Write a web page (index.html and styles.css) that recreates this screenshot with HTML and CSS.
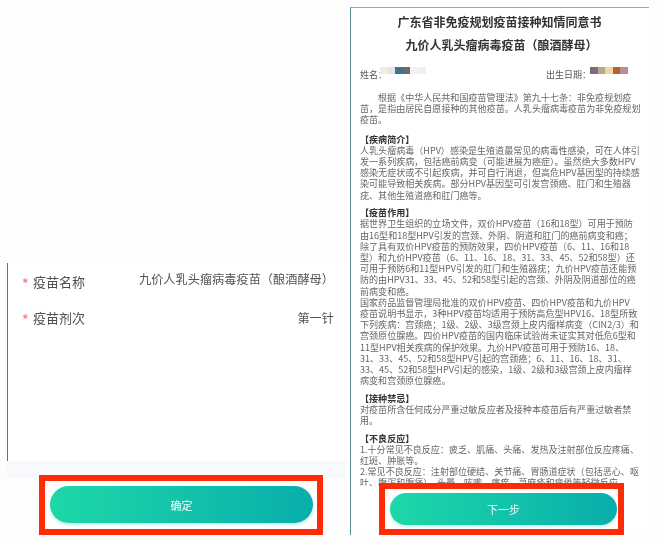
FILE: index.html
```html
<!DOCTYPE html>
<html lang="zh-CN">
<head>
<meta charset="utf-8">
<title>知情同意书</title>
<link rel="stylesheet" href="styles.css">
</head>
<body>
<main class="page">
  <section class="left">
    <div class="form">
      <div class="row row-name">
        <span class="star">*</span><span class="label">疫苗名称</span>
        <span class="value">九价人乳头瘤病毒疫苗（酿酒酵母）</span>
      </div>
      <div class="row row-dose">
        <span class="star">*</span><span class="label">疫苗剂次</span>
        <span class="value">第一针</span>
      </div>
    </div>
    <div class="strip"></div>
    <div class="mark mark-left"><button class="btn btn-left">确定</button></div>
  </section>
  <section class="right">
    <div class="doc">
      <h1 class="title">广东省非免疫规划疫苗接种知情同意书</h1>
      <h2 class="subtitle">九价人乳头瘤病毒疫苗（酿酒酵母）</h2>
      <div class="meta">
        <div class="meta-item meta-name">姓名：<span class="mask mask-name"><i class="c1"></i><i class="c2"></i><i class="c3"></i><i class="c4"></i><i class="c5"></i><i class="c6"></i></span></div>
        <div class="meta-item">出生日期：<span class="mask"><i class="d1"></i><i class="d2"></i><i class="d3"></i><i class="d4"></i><i class="d5"></i></span></div>
      </div>
      <p class="text intro"><span class="indent"></span>根据《中华人民共和国疫苗管理法》第九十七条：非免疫规划疫<br>苗，是指由居民自愿接种的其他疫苗。人乳头瘤病毒疫苗为非免疫规划<br>疫苗。</p>
      <h3 class="head head-first">【疾病简介】</h3>
      <p class="text">人乳头瘤病毒（HPV）感染是生殖道最常见的病毒性感染，可在人体引<br>发一系列疾病，包括癌前病变（可能进展为癌症）。虽然绝大多数HPV<br>感染无症状或不引起疾病，并可自行消退，但高危HPV基因型的持续感<br>染可能导致相关疾病。部分HPV基因型可引发宫颈癌、肛门和生殖器<br>疣、其他生殖道癌和肛门癌等。</p>
      <h3 class="head">【疫苗作用】</h3>
      <p class="text">据世界卫生组织的立场文件，双价HPV疫苗（16和18型）可用于预防<br>由16型和18型HPV引发的宫颈、外阴、阴道和肛门的癌前病变和癌；<br>除了具有双价HPV疫苗的预防效果，四价HPV疫苗（6、11、16和18<br>型）和九价HPV疫苗（6、11、16、18、31、33、45、52和58型）还<br>可用于预防6和11型HPV引发的肛门和生殖器疣；九价HPV疫苗还能预<br>防的由HPV31、33、45、52和58型引起的宫颈、外阴及阴道部位的癌<br>前病变和癌。<br>国家药品监督管理局批准的双价HPV疫苗、四价HPV疫苗和九价HPV<br>疫苗说明书显示，3种HPV疫苗均适用于预防高危型HPV16、18型所致<br>下列疾病：宫颈癌；1级、2级、3级宫颈上皮内瘤样病变（CIN2/3）和<br>宫颈原位腺癌。四价HPV疫苗的国内临床试验尚未证实其对低危6型和<br>11型HPV相关疾病的保护效果。九价HPV疫苗可用于预防16、18、<br>31、33、45、52和58型HPV引起的宫颈癌；6、11、16、18、31、<br>33、45、52和58型HPV引起的感染，1级、2级和3级宫颈上皮内瘤样<br>病变和宫颈原位腺癌。</p>
      <h3 class="head">【接种禁忌】</h3>
      <p class="text">对疫苗所含任何成分严重过敏反应者及接种本疫苗后有严重过敏者禁<br>用。</p>
      <h3 class="head">【不良反应】</h3>
      <p class="text">1.十分常见不良反应：疲乏、肌痛、头痛、发热及注射部位反应疼痛、<br>红斑、肿胀等。<br>2.常见不良反应：注射部位硬结、关节痛、胃肠道症状（包括恶心、呕<br>吐、腹泻和腹痛）、头晕、咳嗽、瘙痒、荨麻疹和疲倦等轻微反应。</p>
    </div>
    <div class="foot">
      <div class="mark mark-right"><button class="btn btn-right">下一步</button></div>
    </div>
  </section>
</main>
</body>
</html>
```
FILE: styles.css
```css
* { box-sizing: border-box; margin: 0; padding: 0; }
html, body { width: 663px; height: 544px; overflow: hidden; background: #fdfdfe; }
body { font-family: "Noto Sans CJK SC", "Open Sans", sans-serif; color: #555; }
.page { display: grid; grid-template-columns: 350px 299px; height: 544px; filter: blur(0.45px); }

.left { display: flex; flex-direction: column; align-items: stretch; padding: 263px 0 9px 7px; }
.form { height: 198px; background: #fff; border-left: 1px solid #4e7f7d; padding-right: 16px; }
.strip { height: 17px; width: 338px; background: #f8f9fd; }
.row { display: flex; align-items: center; height: 18px; }
.row-name { margin-top: 10px; }
.row-dose { margin-top: 18px; }
.star { width: 11px; margin-left: 14px; color: #f48a8e; font-size: 13px; font-weight: 700; }
.label { font-size: 13px; color: #4f4f4f; line-height: 18px; }
.value { margin-left: auto; font-size: 12.2px; line-height: 18px; color: #555; }
.row-name .value { margin-top: -6px; }

.mark { border: 6px solid #ff2a06; background: #fff; display: flex; }
.mark-left { width: 284px; height: 60px; margin-left: 32px; padding: 5px 4px 0 5px; margin-top: -3px; }
.btn { border: 0; border-radius: 19px; color: #f4fffc; font-family: inherit; font-size: 11px; background: linear-gradient(90deg, #1ed8a8, #08aeac); box-shadow: 0 2px 3px rgba(30, 190, 170, .25); }
.btn-left { width: 264px; height: 37px; }

.right { display: flex; flex-direction: column; height: 528px; margin-top: 7px; border-top: 1px solid #5cc4b0; border-left: 1px solid #5f8a9a; background: #fff; }
.doc { height: 478px; overflow: hidden; padding: 2px 10px 0 9px; }
.title, .subtitle { font-size: 12px; line-height: 23px; text-align: center; color: #333; font-weight: 700; white-space: nowrap; }
.subtitle { padding-left: 4px; }
.meta { display: flex; font-size: 9px; line-height: 12px; margin-top: 13px; white-space: nowrap; }
.meta-item { display: flex; align-items: flex-start; }
.meta-name { width: 186px; }
.mask { display: flex; height: 7px; margin-top: -2px; margin-left: -1px; }
.mask-name { margin-left: -7px; }
.mask i { display: block; width: 7.6px; height: 7px; }
.c1 { background: #f6ebdf; } .c2 { background: #e4e4e2; } .c3 { background: #46708f; } .c4 { background: #6a6d6c; } .c5 { background: #f7f2ee; } .c6 { background: #efefef; }
.d1 { background: #7c6a7d; } .d2 { background: #b4aa84; } .d3 { background: #efd3aa; } .d4 { background: #ae6530; } .d5 { background: #b89090; }
.text { font-size: 9.05px; line-height: 11.2px; color: #666; white-space: nowrap; }
.intro { margin-top: 11px; }
.indent { display: inline-block; width: 18px; }
.head { font-size: 9.05px; line-height: 11.2px; font-weight: 700; color: #333; margin-top: 6.3px; }
.head-first { margin-top: 8px; }

.foot { flex: 1; background: #fff; }
.mark-right { width: 245px; height: 52px; margin-left: 28px; padding: 4px 1px 0 5px; margin-top: -3px; }
.btn-right { width: 227px; height: 32px; }
```
